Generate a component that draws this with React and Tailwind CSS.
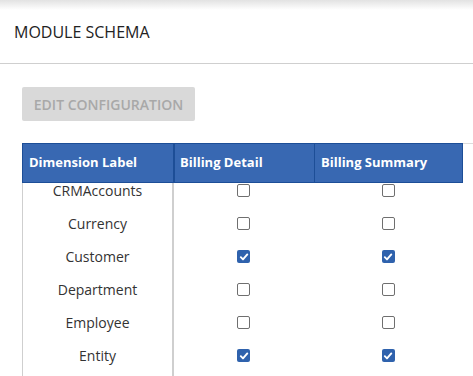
import React from 'react';

const rows = [
  { label: 'CRMAccounts', detail: false, summary: false },
  { label: 'Currency', detail: false, summary: false },
  { label: 'Customer', detail: true, summary: true },
  { label: 'Department', detail: false, summary: false },
  { label: 'Employee', detail: false, summary: false },
  { label: 'Entity', detail: true, summary: true },
];

function Check({ checked }) {
  if (checked) {
    return (
      <span className="flex h-[13px] w-[13px] items-center justify-center rounded-[2px] bg-[#2f62ad]">
        <svg width="10" height="10" viewBox="0 0 10 10" fill="none">
          <path d="M1.8 5.2 L4 7.4 L8.3 2.4" stroke="white" strokeWidth="1.9" strokeLinecap="round" strokeLinejoin="round" />
        </svg>
      </span>
    );
  }
  return <span className="block h-[13px] w-[13px] rounded-[2px] border border-[#6f6f6f] bg-white"></span>;
}

export default function App() {
  return (
    <div className="h-[376px] w-[473px] overflow-hidden bg-white font-['Open_Sans',sans-serif]">
      {/* top shadow */}
      <div className="h-[10px] bg-gradient-to-b from-[#e2e2e2] to-white"></div>

      {/* Title */}
      <div className="flex h-[53px] items-center pl-[14px] pb-[9px]">
        <h1 className="text-[16px] text-[#222]">MODULE SCHEMA</h1>
      </div>
      <div className="h-px bg-[#cfcfcf]"></div>

      {/* Button */}
      <div className="px-[22px] pt-[23px]">
        <button className="flex h-[34px] w-[173px] items-center justify-center rounded-[2px] bg-[#d9d9d9] text-[14px] font-semibold text-[#a8a8a8]">
          EDIT CONFIGURATION
        </button>
      </div>

      {/* Table */}
      <div className="mt-[22px] flex pl-[22px]">
        <div className="w-[441px]">
          <div className="grid h-[40px] grid-cols-[150px_141px_150px] border border-[#1d4e97] bg-[#3868b2] text-[13px] font-bold text-white">
            <div className="flex items-center pl-[6px]">Dimension Label</div>
            <div className="flex items-center border-l-2 border-[#1d4e97] pl-[5px]">Billing Detail</div>
            <div className="flex items-center border-l border-[#1d4e97] pl-[6px]">Billing Summary</div>
          </div>
          <div className="h-[194px] overflow-hidden">
            {rows.map((r, i) => (
              <div
                key={r.label}
                className={
                  i === 0
                    ? 'grid h-[24px] grid-cols-[150px_141px_150px] text-[14px] leading-[16px] text-[#333]'
                    : 'grid h-[33px] grid-cols-[150px_141px_150px] text-[14px] text-[#333]'
                }
              >
                <div className={i === 0 ? 'flex items-start justify-center border-l border-[#cfcfcf]' : 'flex items-center justify-center border-l border-[#cfcfcf]'}>
                  {r.label}
                </div>
                <div className={i === 0 ? 'flex items-start justify-center border-l-2 border-[#cfcfcf] pt-px' : 'flex items-center justify-center border-l-2 border-[#cfcfcf]'}>
                  <Check checked={r.detail} />
                </div>
                <div className={i === 0 ? 'flex items-start justify-center pt-px' : 'flex items-center justify-center'}>
                  <Check checked={r.summary} />
                </div>
              </div>
            ))}
            <div className="grid h-[33px] grid-cols-[150px_141px_150px]">
              <div className="border-l border-[#cfcfcf]"></div>
              <div className="border-l-2 border-[#cfcfcf]"></div>
            </div>
          </div>
        </div>
        <div className="h-px flex-1 bg-[#dcdcdc]"></div>
      </div>
    </div>
  );
}
